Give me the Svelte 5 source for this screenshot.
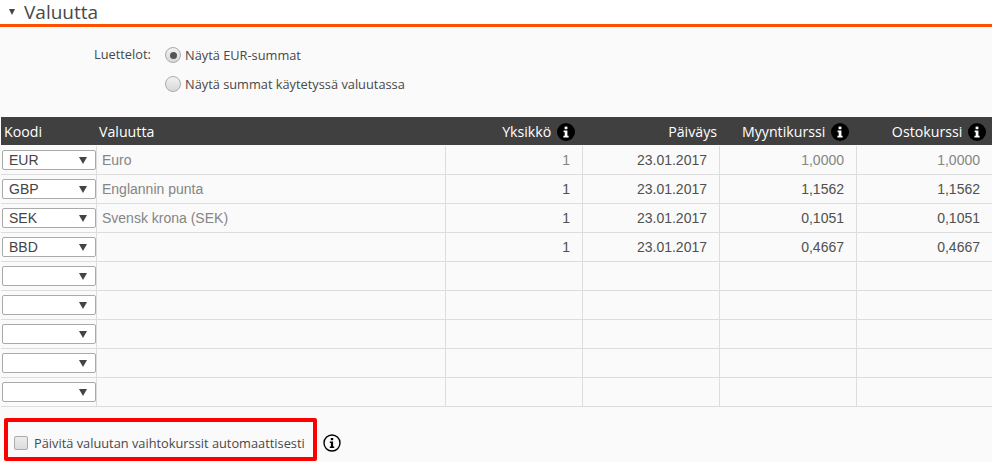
<script>
	const rows = [
		{ code: 'EUR', name: 'Euro', unit: '1', date: '23.01.2017', sell: '1,0000', buy: '1,0000', muted: true },
		{ code: 'GBP', name: 'Englannin punta', unit: '1', date: '23.01.2017', sell: '1,1562', buy: '1,1562' },
		{ code: 'SEK', name: 'Svensk krona (SEK)', unit: '1', date: '23.01.2017', sell: '0,1051', buy: '0,1051' },
		{ code: 'BBD', name: '', unit: '1', date: '23.01.2017', sell: '0,4667', buy: '0,4667' },
		{ code: '' },
		{ code: '' },
		{ code: '' },
		{ code: '' },
		{ code: '' }
	];
</script>

{#snippet infoSolid()}
	<svg class="info" width="18" height="18" viewBox="0 0 18 18">
		<circle cx="9" cy="9" r="9" fill="#000" />
		<rect x="7.6" y="3.6" width="2.8" height="2.6" fill="#fff" />
		<path d="M6.6 7.6h3.8v5.2h1.2v1.6H6.4v-1.6h1.3V9.2H6.6z" fill="#fff" />
	</svg>
{/snippet}

<div class="page">
	<header class="section-head">
		<span class="caret"></span>
		<h1>Valuutta</h1>
	</header>

	<div class="options">
		<span class="options-label">Luettelot:</span>
		<div class="radios">
			<label class="radio"><span class="radio-dot checked"></span>Näytä EUR-summat</label>
			<label class="radio"><span class="radio-dot"></span>Näytä summat käytetyssä valuutassa</label>
		</div>
	</div>

	<table>
		<colgroup>
			<col style="width: 96px" />
			<col style="width: 349px" />
			<col style="width: 137px" />
			<col style="width: 137px" />
			<col style="width: 137px" />
			<col style="width: 135px" />
		</colgroup>
		<thead>
			<tr>
				<th>Koodi</th>
				<th class="name-head">Valuutta</th>
				<th class="c-num">Yksikkö {@render infoSolid()}</th>
				<th class="c-num date-head">Päiväys</th>
				<th class="c-num">Myyntikurssi {@render infoSolid()}</th>
				<th class="c-num last-head">Ostokurssi {@render infoSolid()}</th>
			</tr>
		</thead>
		<tbody>
			{#each rows as row}
				<tr class:muted={row.muted}>
					<td>
						<div class="select"><span>{row.code}</span><i></i></div>
					</td>
					<td class="name">{row.name ?? ''}</td>
					<td class="c-num unit">{row.unit ?? ''}</td>
					<td class="c-num date">{row.date ?? ''}</td>
					<td class="c-num rate">{row.sell ?? ''}</td>
					<td class="c-num rate">{row.buy ?? ''}</td>
				</tr>
			{/each}
		</tbody>
	</table>

	<div class="auto">
		<label class="auto-box"><span class="check"></span>Päivitä valuutan vaihtokurssit automaattisesti</label>
		<svg class="auto-info" width="18" height="18" viewBox="0 0 18 18">
			<circle cx="9" cy="9" r="8" fill="none" stroke="#000" stroke-width="1.4" />
			<rect x="7.8" y="4" width="2.4" height="2.2" fill="#000" />
			<path d="M6.8 7.6h3.3v5h1.1v1.3H6.8v-1.3h1.1V8.9H6.8z" fill="#000" />
		</svg>
	</div>
</div>

<style>
	:global(body) {
		margin: 0;
		background: #fafafa;
	}

	.page {
		width: 992px;
		height: 462px;
		overflow: hidden;
		font-family: 'Open Sans', sans-serif;
		color: #484848;
	}

	.section-head {
		display: flex;
		align-items: center;
		height: 24px;
		padding-left: 9px;
		gap: 9px;
		background: #fff;
		border-bottom: 3px solid #ff5000;
	}

	.caret {
		width: 0;
		height: 0;
		border-left: 3.5px solid transparent;
		border-right: 3.5px solid transparent;
		border-top: 6px solid #444;
	}

	h1 {
		margin: 0;
		font-size: 19px;
		font-weight: 400;
		line-height: 24px;
		color: #484848;
	}

	.options {
		display: flex;
		padding: 18px 0 0 94px;
		height: 90px;
		box-sizing: border-box;
		font-size: 12.8px;
	}

	.options-label {
		width: 71px;
		margin-top: -1px;
		line-height: 20px;
	}

	.radios {
		display: flex;
		flex-direction: column;
		gap: 9px;
	}

	.radio {
		display: flex;
		align-items: center;
		gap: 4px;
		height: 20px;
	}

	.radio-dot {
		position: relative;
		width: 14px;
		height: 14px;
		border: 1px solid #aaa;
		border-radius: 50%;
		background: linear-gradient(#f2f2f2, #d8d8d8);
	}

	.radio-dot.checked::after {
		content: '';
		position: absolute;
		left: 3.5px;
		top: 3.5px;
		width: 7px;
		height: 7px;
		border-radius: 50%;
		background: #555;
	}

	table {
		border-collapse: separate;
		border-spacing: 0;
		table-layout: fixed;
		width: 991px;
		margin-left: 1px;
	}

	th {
		height: 28px;
		padding: 0 3px;
		background: #404040;
		border-bottom: 1px solid #fafafa;
		color: #fff;
		font-size: 14.2px;
		font-weight: 400;
		text-align: left;
		white-space: nowrap;
	}

	th.name-head {
		padding-left: 2px;
	}

	th.c-num {
		text-align: right;
		padding-right: 8px;
	}

	th.date-head {
		padding-right: 3px;
	}

	th.last-head {
		padding-right: 6px;
	}

	.info {
		vertical-align: -4px;
		margin-left: 2px;
	}

	td {
		height: 28px;
		padding: 0;
		border-right: 1px solid #ddd;
		border-bottom: 1px solid #ddd;
		font-family: 'Liberation Sans', sans-serif;
		font-size: 14px;
		box-sizing: content-box;
	}

	td:last-child {
		border-right: 0;
	}

	.name {
		padding-left: 5px;
		color: #858585;
	}

	td.c-num {
		text-align: right;
		padding-right: 12px;
		color: #505050;
	}

	.muted td.unit,
	.muted td.rate {
		color: #858585;
	}

	.select {
		display: flex;
		align-items: center;
		justify-content: space-between;
		box-sizing: border-box;
		width: 94px;
		height: 20px;
		margin-left: 1px;
		padding: 0 8px 0 6px;
		background: #fff;
		border: 1px solid #aaa;
		border-radius: 2px;
		color: #444;
	}

	.select i {
		width: 0;
		height: 0;
		border-left: 4px solid transparent;
		border-right: 4px solid transparent;
		border-top: 7px solid #444;
	}

	.auto {
		display: flex;
		align-items: flex-start;
		gap: 6px;
		margin: 11px 0 0 4px;
	}

	.auto-info {
		margin-top: 16px;
	}

	.auto-box {
		display: flex;
		align-items: center;
		gap: 6px;
		box-sizing: border-box;
		width: 313px;
		height: 43px;
		padding: 6px 0 0 6px;
		border: 4px solid #f00;
		border-radius: 2px;
		font-size: 12.8px;
		white-space: nowrap;
	}

	.check {
		width: 12px;
		height: 12px;
		border: 1px solid #aaa;
		border-radius: 2px;
		background: linear-gradient(#ececec, #dcdcdc);
		flex-shrink: 0;
	}
</style>
